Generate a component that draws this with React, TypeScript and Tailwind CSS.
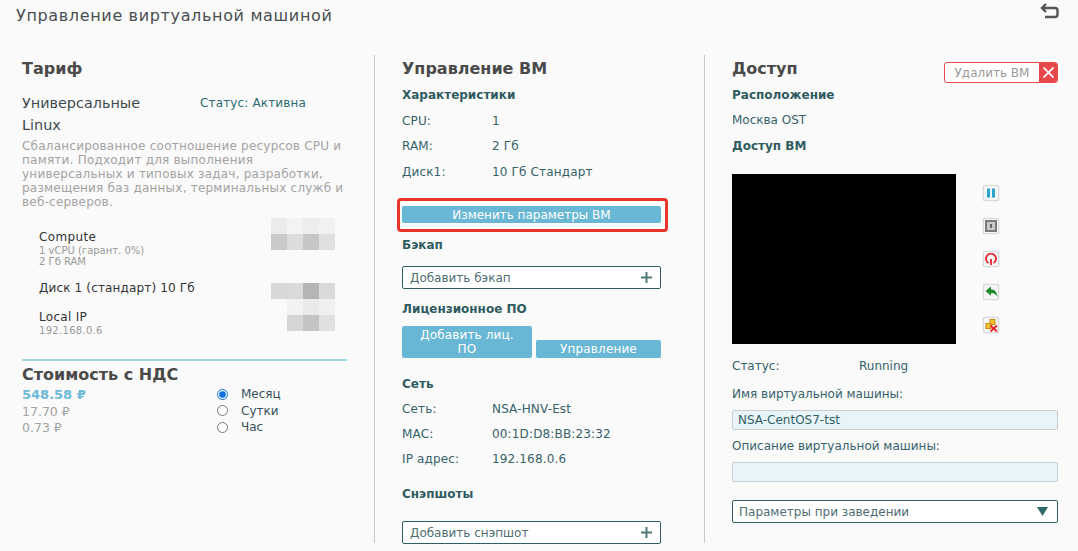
import * as React from "react";

const TEAL = "text-[#36626a]";

function SectionTitle({ children, className = "" }: { children: React.ReactNode; className?: string }) {
  return <h2 className={`text-[16px] leading-[20px] font-bold text-[#4a4a4a] ${className}`}>{children}</h2>;
}

function SubTitle({ children, className = "" }: { children: React.ReactNode; className?: string }) {
  return <h3 className={`text-[12px] leading-[16px] font-bold text-[#2f5a60] ${className}`}>{children}</h3>;
}

function InfoRow({ label, value, className = "" }: { label: string; value: string; className?: string }) {
  return (
    <div className={`flex text-[12px] leading-[16px] tracking-[0.15px] ${TEAL} ${className}`}>
      <span className="w-[90px]">{label}</span>
      <span>{value}</span>
    </div>
  );
}

/** Размытая цена: ячейки по 16px. */
function Blur({ rows }: { rows: string[][] }) {
  return (
    <div className="flex flex-col">
      {rows.map((row, i) => (
        <div key={i} className="flex justify-end">
          {row.map((c, j) => (
            <div key={j} className="h-[16px] w-[16px]" style={{ background: c }} />
          ))}
        </div>
      ))}
    </div>
  );
}

function AddBox({ label, className = "" }: { label: string; className?: string }) {
  return (
    <div className={`flex h-[23px] w-[259px] items-center justify-between rounded-[2px] border border-[#2f5f63] bg-white pl-[7px] pr-[8px] text-[12px] text-[#4f6d72] ${className}`}>
      <span>{label}</span>
      <svg width="11" height="11" viewBox="0 0 11 11">
        <path d="M5.5 0v11M0 5.5h11" stroke="#4e7a78" strokeWidth="2" />
      </svg>
    </div>
  );
}

function Radio({ label, checked = false }: { label: string; checked?: boolean }) {
  return (
    <label className="flex h-[16.5px] items-center text-[12px] text-[#36505a]">
      <input type="radio" name="period" defaultChecked={checked} className="m-0 h-[11px] w-[11px] accent-[#0b6fe0]" />
      <span className="ml-[13px]">{label}</span>
    </label>
  );
}

function VmButton({ children }: { children: React.ReactNode }) {
  return (
    <div className="flex h-[16px] w-[16px] items-center justify-center rounded-[2px] border border-[#d9d9d9] bg-[#f6f6f6] shadow-[0_0_1px_#bbb]">
      {children}
    </div>
  );
}

function VmControls() {
  return (
    <div className="ml-[27px] flex flex-col gap-[17px] pt-[11px]">
      <VmButton>
        <svg width="10" height="10" viewBox="0 0 10 10">
          <rect x="1" y="0.5" width="3" height="9" fill="#2ea3cf" />
          <rect x="6" y="0.5" width="3" height="9" fill="#2ea3cf" />
        </svg>
      </VmButton>
      <VmButton>
        <svg width="12" height="12" viewBox="0 0 12 12">
          <rect x="0" y="0" width="12" height="12" fill="#7a7a7a" />
          <rect x="2" y="2" width="8" height="8" fill="#c9c9c9" />
          <rect x="5" y="4" width="2" height="4" fill="#666" />
        </svg>
      </VmButton>
      <VmButton>
        <svg width="12" height="12" viewBox="0 0 12 12" fill="none">
          <path d="M3.5 10A5 5 0 1 1 8.500 10" stroke="#e8222c" strokeWidth="1.8" />
          <path d="M6 6v6" stroke="#e8222c" strokeWidth="1.8" />
        </svg>
      </VmButton>
      <VmButton>
        <svg width="13" height="12" viewBox="0 0 13 12">
          <path d="M0.500 5 6 0.500V3.500C10 3.500 12 6 12.500 11 11 8 9 7 6 7V9.800Z" fill="#1f8a2c" />
        </svg>
      </VmButton>
      <VmButton>
        <svg width="13" height="13" viewBox="0 0 13 13">
          <rect x="5" y="0.500" width="5" height="5" fill="#f4c430" stroke="#c98a12" />
          <rect x="1" y="4.500" width="5" height="5" fill="#f4c430" stroke="#c98a12" />
          <path d="M5.500 6.500 12 12.500M12 6.500 5.500 12.500" stroke="#e8222c" strokeWidth="1.8" />
        </svg>
      </VmButton>
    </div>
  );
}

function TariffColumn() {
  return (
    <section className="h-[488px] w-[375px] shrink-0 border-r border-[#c9c9c9] pl-[22px] pr-[27px] pt-[4px]">
      <SectionTitle>Тариф</SectionTitle>
      <div className="mt-[13px] flex text-[14.4px] leading-[22px] text-[#3f4a4f]">
        <div className="w-[178px]">
          Универсальные
          <br />
          Linux
        </div>
        <span className="pt-[1px] text-[12px] leading-[20px] tracking-[0.15px] text-[#2f6a72]">Статус: Активна</span>
      </div>
      <p className="mt-[3px] w-[325px] text-[12px] leading-[14px] tracking-[0.22px] text-[#a3a3a3]">
        Сбалансированное соотношение ресурсов CPU и памяти. Подходит для выполнения универсальных и типовых задач, разработки, размещения баз данных, терминальных служб и веб-серверов.
      </p>
      <div className="mt-[9px] flex justify-between pl-[17px] pr-[12px]">
        <div className="pt-[11px]">
          <div className="text-[12px] leading-[16px] tracking-[0.35px] text-[#333]">Compute</div>
          <div className="text-[10px] leading-[11px] text-[#999]">1 vCPU (гарант. 0%)</div>
          <div className="text-[10px] leading-[11px] text-[#999]">2 Гб RAM</div>
        </div>
        <Blur rows={[["#ebebeb", "#f3f3f3", "#ededed", "#f1f1f1"], ["#c9c9c9", "#dcdcdc", "#c6c6c6", "#e0e0e0"]]} />
      </div>
      <div className="mt-[16px] flex justify-between pl-[17px] pr-[12px]">
        <div className="-mt-[3px] text-[12px] leading-[16px] tracking-[0.15px] text-[#333]">Диск 1 (стандарт) 10 Гб</div>
        <Blur rows={[["#d8d8d8", "#dadada", "#b5b5b5", "#d9dbdb"]]} />
      </div>
      <div className="flex justify-between pl-[17px] pr-[12px]">
        <div className="pt-[10px]">
          <div className="text-[12px] leading-[16px] tracking-[0.3px] text-[#333]">Local IP</div>
          <div className="text-[10px] leading-[11px] tracking-[0.3px] text-[#999]">192.168.0.6</div>
        </div>
        <Blur rows={[["#f2f2f2", "#eaeaea", "#f0f0f0"], ["#d6d6d6", "#c4c4c4", "#dfe0e0"]]} />
      </div>
      <div className="mt-[23px] border-t-2 border-[#a3d3e6]" />
      <SectionTitle className="mt-[4px]">Стоимость с НДС</SectionTitle>
      <div className="mt-[2px] flex">
        <div className="w-[195px] text-[12.5px] leading-[16.5px] text-[#a3a3a3]">
          <div className="text-[13px] font-bold text-[#6db9d8]">548.58 ₽</div>
          <div>17.70 ₽</div>
          <div>0.73 ₽</div>
        </div>
        <div className="-mt-[1px]">
          <Radio label="Месяц" checked />
          <Radio label="Сутки" />
          <Radio label="Час" />
        </div>
      </div>
    </section>
  );
}

function ManageColumn() {
  return (
    <section className="h-[488px] w-[330px] shrink-0 border-r border-[#c9c9c9] pl-[27px] pt-[4px]">
      <SectionTitle>Управление ВМ</SectionTitle>
      <SubTitle className="mt-[8px]">Характеристики</SubTitle>
      <InfoRow className="mt-[10px]" label="CPU:" value="1" />
      <InfoRow className="mt-[9px]" label="RAM:" value="2 Гб" />
      <InfoRow className="mt-[10px]" label="Диск1:" value="10 Гб Стандарт" />
      <div className="relative mt-[26px] w-[259px]">
        <div className="flex h-[17px] items-center justify-center rounded-[2px] bg-[#68b7d4] text-[12px] text-white">Изменить параметры ВМ</div>
        <div className="absolute -bottom-[9px] -left-[5px] -right-[7px] -top-[8px] rounded-[4px] border-[3px] border-[#e5352b]" />
      </div>
      <SubTitle className="mt-[14px]">Бэкап</SubTitle>
      <AddBox className="mt-[13px]" label="Добавить бэкап" />
      <SubTitle className="mt-[12px]">Лицензионное ПО</SubTitle>
      <div className="mt-[9px] flex w-[259px] items-end justify-between text-[12px] leading-[14px] tracking-[0.15px] text-white">
        <div className="flex h-[32px] w-[130px] items-center justify-center rounded-[2px] bg-[#68b7d4] px-[12px] text-center">Добавить лиц. ПО</div>
        <div className="flex h-[18px] w-[125px] items-center justify-center rounded-[2px] bg-[#68b7d4]">Управление</div>
      </div>
      <SubTitle className="mt-[18px]">Сеть</SubTitle>
      <InfoRow className="mt-[9px]" label="Сеть:" value="NSA-HNV-Est" />
      <InfoRow className="mt-[9px]" label="MAC:" value="00:1D:D8:BB:23:32" />
      <InfoRow className="mt-[9px]" label="IP адрес:" value="192.168.0.6" />
      <SubTitle className="mt-[19px]">Снэпшоты</SubTitle>
      <AddBox className="mt-[19px]" label="Добавить снэпшот" />
    </section>
  );
}

function AccessColumn() {
  const inputCls = "h-[20px] w-[326px] rounded-[2px] border border-[#c8cfd2] bg-[#e9f4f9] px-[5px] text-[12px] leading-[18px] text-[#2f5f66]";
  return (
    <section className="min-w-0 flex-1 pl-[27px] pt-[4px]">
      <div className="flex items-start justify-between pr-[20px]">
        <SectionTitle>Доступ</SectionTitle>
        <div className="mt-[3px] flex h-[21px] w-[114px] overflow-hidden rounded-[3px] border border-[#e8474c] bg-white">
          <span className="flex-1 text-center text-[12px] leading-[21px] text-[#9a9a9a]">Удалить ВМ</span>
          <span className="flex w-[18px] items-center justify-center bg-[#e8474c]">
            <svg width="11" height="11" viewBox="0 0 11 11">
              <path d="M0.500 0.500 10.500 10.500M10.500 0.500 0.500 10.500" stroke="#fff" strokeWidth="1.8" />
            </svg>
          </span>
        </div>
      </div>
      <SubTitle className="mt-[4px]">Расположение</SubTitle>
      <div className={`mt-[9px] text-[12px] leading-[16px] ${TEAL}`}>Москва OST</div>
      <SubTitle className="mt-[10px]">Доступ ВМ</SubTitle>
      <div className="mt-[20px] flex">
        <div className="h-[170px] w-[224px] bg-black" />
        <VmControls />
      </div>
      <div className={`mt-[14px] flex text-[12px] leading-[16px] ${TEAL}`}>
        <span className="w-[127px]">Статус:</span>
        <span>Running</span>
      </div>
      <div className={`mt-[12px] text-[12px] leading-[16px] ${TEAL}`}>Имя виртуальной машины:</div>
      <div className={`mt-[8px] ${inputCls}`}>NSA-CentOS7-tst</div>
      <div className={`mt-[8px] text-[12px] leading-[16px] ${TEAL}`}>Описание виртуальной машины:</div>
      <div className={`mt-[8px] ${inputCls}`} />
      <div className="mt-[18px] flex h-[23px] w-[326px] items-center justify-between rounded-[2px] border border-[#2f5f63] bg-white pl-[6px] pr-[9px] text-[12px] text-[#4f6d72]">
        <span>Параметры при заведении</span>
        <svg width="11" height="9" viewBox="0 0 11 9">
          <path d="M0 0h11L5.500 9Z" fill="#2f6a68" />
        </svg>
      </div>
    </section>
  );
}

export default function App() {
  return (
    <div className="h-[551px] w-[1078px] overflow-hidden bg-[#fafafa] font-['DejaVu_Sans',sans-serif]">
      <header className="flex h-[55px] items-start justify-between pl-[16px] pr-[19px]">
        <h1 className="mt-[7px] text-[16px] leading-[18px] tracking-[0.65px] text-[#4a4f52]">Управление виртуальной машиной</h1>
        <svg className="mt-[3px]" width="19" height="16" viewBox="0 0 19 16" fill="none">
          <path d="M6 1 2 5l4 4" stroke="#555" strokeWidth="2.4" />
          <path d="M2 5h13a2.500 2.500 0 0 1 2.500 2.500v4A2.500 2.500 0 0 1 15 14H5" stroke="#555" strokeWidth="2.4" />
        </svg>
      </header>
      <main className="flex">
        <TariffColumn />
        <ManageColumn />
        <AccessColumn />
      </main>
    </div>
  );
}
